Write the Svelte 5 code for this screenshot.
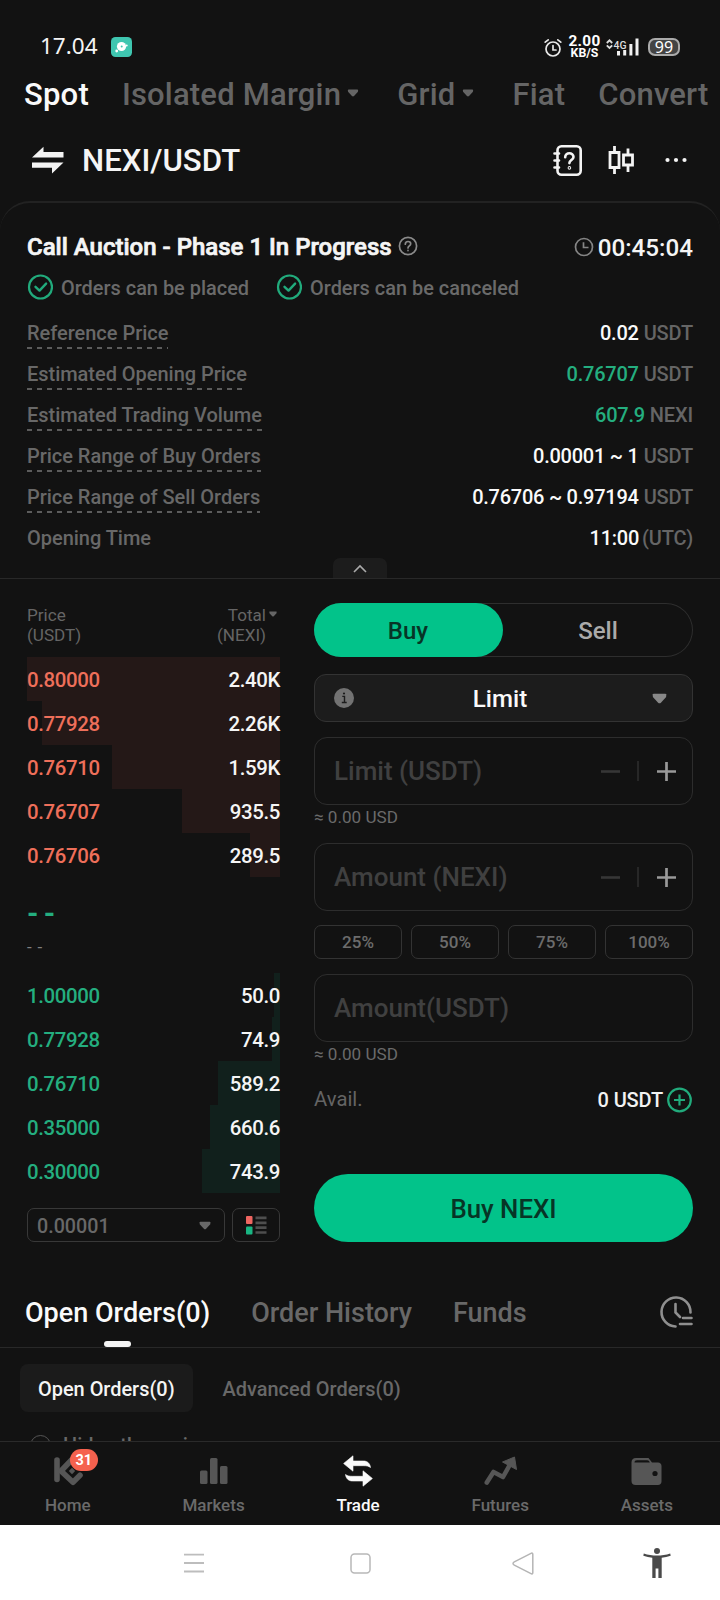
<script>
  const marketTabs = [
    { label: 'Spot', active: true },
    { label: 'Isolated Margin', menu: true },
    { label: 'Grid', menu: true },
    { label: 'Fiat' },
    { label: 'Convert' }
  ];

  const details = [
    { label: 'Reference Price', value: '0.02', unit: 'USDT' },
    { label: 'Estimated Opening Price', value: '0.76707', unit: 'USDT', green: true },
    { label: 'Estimated Trading Volume', value: '607.9', unit: 'NEXI', green: true },
    { label: 'Price Range of Buy Orders', value: '0.00001 ~ 1', unit: 'USDT' },
    { label: 'Price Range of Sell Orders', value: '0.76706 ~ 0.97194', unit: 'USDT' },
    { label: 'Opening Time', value: '11:00', unit: '(UTC)', plain: true }
  ];

  const asks = [
    { price: '0.80000', total: '2.40K', depth: 253 },
    { price: '0.77928', total: '2.26K', depth: 238 },
    { price: '0.76710', total: '1.59K', depth: 168 },
    { price: '0.76707', total: '935.5', depth: 98 },
    { price: '0.76706', total: '289.5', depth: 30 }
  ];

  const bids = [
    { price: '1.00000', total: '50.0', depth: 6 },
    { price: '0.77928', total: '74.9', depth: 8 },
    { price: '0.76710', total: '589.2', depth: 62 },
    { price: '0.35000', total: '660.6', depth: 70 },
    { price: '0.30000', total: '743.9', depth: 78 }
  ];

  const shares = ['25%', '50%', '75%', '100%'];
</script>

{#snippet caret(w, h)}
  <svg class="caret" width={w} height={h} viewBox="0 0 14 10"><path d="M1.6.6h10.8c1 0 1.400.9.800 1.900v1L8.300 8.900c-.7.800-1.900.800-2.600 0L.800 3.500v-1C.2 1.500.600.6 1.600.6z" fill="currentColor" /></svg>
{/snippet}

{#snippet check()}
  <svg width="26" height="26" viewBox="0 0 26 26" fill="none" stroke="#21ab7c">
    <circle cx="13.500" cy="13" r="11.500" stroke-width="2.200" />
    <path d="M8.500 12.800l4 3.800 6.600-7" stroke-width="2.400" stroke-linecap="round" stroke-linejoin="round" />
  </svg>
{/snippet}

{#snippet stepper()}
  <svg class="stepper" width="78" height="24" viewBox="0 0 78 24" fill="none">
    <path d="M1 12.500h19" stroke="#363636" stroke-width="2.600" />
    <path d="M38 2v20" stroke="#2c2c2c" stroke-width="1.700" />
    <path d="M57 12.500h19M66.500 3v19" stroke="#999" stroke-width="2.700" />
  </svg>
{/snippet}

<div class="screen">
  <header class="status">
    <span class="clock">17.04</span>
    <svg class="app" width="21" height="20" viewBox="0 0 21 20">
      <rect width="21" height="20" rx="4.500" fill="#3fc6b0" />
      <circle cx="10.500" cy="9.500" r="4.600" fill="#fff" />
      <circle cx="10.700" cy="9.500" r="1" fill="#3fc6b0" />
      <circle cx="5.700" cy="14" r="1.400" fill="#fff" />
      <circle cx="15.700" cy="8.500" r="1" fill="#fff" />
    </svg>
    <svg class="alarm" width="18" height="20" viewBox="0 0 18 20" fill="none" stroke="#e8e8e8" stroke-width="1.700" stroke-linecap="round">
      <circle cx="9" cy="11" r="7" />
      <path d="M9 7.500V12h3M1.200 4.200l3-2.400M16.800 4.200l-3-2.400" />
    </svg>
    <span class="speed"><b>2.00</b><i>KB/S</i></span>
    <svg class="bars" width="34" height="20" viewBox="0 0 34 20">
      <path d="M.8 6L3.500 3.300 6.200 6M.8 8.300L3.500 11l2.700-2.700" fill="none" stroke="#ddd" stroke-width="1.800" />
      <path d="M11 14h3v4.500h-3zM17.200 13h3v5.500h-3zM23.400 7h3v11.500h-3zM29.500 1.500h3v17h-3z" fill="#f0f0f0" />
      <text x="7.500" y="11.500" font-size="11.500" font-family="Roboto" font-weight="500" fill="#ddd" textLength="13" lengthAdjust="spacingAndGlyphs">4G</text>
    </svg>
    <span class="battery">99</span>
  </header>

  <nav class="markets">
    {#each marketTabs as t}
      <span class="market" class:active={t.active}>{t.label}{#if t.menu}{@render caret(12, 8)}{/if}</span>
    {/each}
  </nav>

  <div class="pair">
    <svg width="32" height="28" viewBox="0 0 32 28" fill="#f3f3f3">
      <path d="M0 11.500L11.500 .8V6H31.500v5.500zM31.500 16.500L20 27.500V21.800H0v-5.300z" />
    </svg>
    <h1>NEXI/USDT</h1>
    <svg class="guide" width="29" height="31" viewBox="0 0 29 31" fill="none" stroke="#f3f3f3" stroke-width="2.600" stroke-linecap="round">
      <rect x="4.500" y="1.300" width="23.200" height="28.400" rx="4" />
      <path d="M1.500 8.500h4.500M1.500 15.500h4.500M1.500 22.500h4.500" />
      <path d="M12.200 12.200c0-5.300 8.300-5 8.300-.300 0 3-4.100 3.300-4.100 6.200" />
      <circle cx="16.400" cy="22.900" r=".5" />
    </svg>
    <svg class="candles" width="26" height="28" viewBox="0 0 26 28" fill="none" stroke="#f3f3f3" stroke-width="2.800">
      <path d="M2 6.500h9v15H2zM6.500 0v6.500M6.500 21.500V28M15.500 9h9v10h-9zM20 2.500v6M20 19v7" />
    </svg>
    <svg class="dots" width="22" height="6" viewBox="0 0 22 6" fill="#f3f3f3"><circle cx="2.500" cy="3" r="2.100" /><circle cx="11" cy="3" r="2.100" /><circle cx="19.500" cy="3" r="2.100" /></svg>
  </div>

  <section class="auction">
    <div class="heading">
      <h2>Call Auction - Phase 1 In Progress</h2>
      <svg width="20" height="20" viewBox="0 0 20 20" fill="none" stroke="#8a8a8a" stroke-width="1.700" stroke-linecap="round">
        <circle cx="10" cy="10" r="8.600" />
        <path d="M7.300 8.200c0-3.600 5.400-3.500 5.400-.400 0 2-2.700 2.300-2.700 4.200M10 14.400v.200" />
      </svg>
      <svg class="wait" width="20" height="20" viewBox="0 0 20 20" fill="none" stroke="#858585" stroke-width="1.700">
        <circle cx="10" cy="10" r="8.500" /><path d="M9.500 5.300v5.200h5" />
      </svg>
      <time>00:45:04</time>
    </div>
    <div class="allowed">
      {@render check()}<span class="first">Orders can be placed</span>
      {@render check()}<span>Orders can be canceled</span>
    </div>
    {#each details as d}
      <div class="detail">
        <span class="label" class:plain={d.plain}>{d.label}</span>
        <span class="value" class:green={d.green}>{d.value}</span><span class="unit" class:tight={d.plain}>{d.unit}</span>
      </div>
    {/each}
    <div class="fold">
      <svg width="14" height="9" viewBox="0 0 14 9" fill="none" stroke="#aaa" stroke-width="1.600"><path d="M1 8l6-6 6 6" /></svg>
    </div>
  </section>

  <main>
    <section class="book">
      <div class="bookhead">
        <span>Price<br />(USDT)</span>
        <span class="total">Total<br />(NEXI)</span>
        {@render caret(8, 6)}
      </div>
      {#each asks as r}
        <div class="level">
          <span class="depth ask" style="width: {r.depth}px"></span>
          <span class="price red">{r.price}</span><span class="qty">{r.total}</span>
        </div>
      {/each}
      <div class="last"><span class="lastprice">- -</span><span class="lastfiat">- -</span></div>
      {#each bids as r}
        <div class="level">
          <span class="depth bid" style="width: {r.depth}px"></span>
          <span class="price green">{r.price}</span><span class="qty">{r.total}</span>
        </div>
      {/each}
      <div class="tools">
        <div class="tick"><span>0.00001</span>{@render caret(12, 9)}</div>
        <div class="mode">
          <svg width="21" height="19" viewBox="0 0 21 19">
            <rect x="0" y="0" width="6.500" height="8" rx="1" fill="#ee6560" />
            <rect x="0" y="10.500" width="6.500" height="8" rx="1" fill="#19b582" />
            <path d="M9.500 1.800h11M9.500 6.800h11M9.500 11.600h11M9.500 16.500h11" stroke="#4e4e4e" stroke-width="2.700" />
          </svg>
        </div>
      </div>
    </section>

    <section class="form">
      <div class="side"><span class="buy">Buy</span><span class="sell">Sell</span></div>
      <div class="type">
        <svg width="20" height="20" viewBox="0 0 20 20"><circle cx="10" cy="10" r="10" fill="#727272" /><path d="M8.300 8.400h2.200v6M7.800 14.500h4.900" fill="none" stroke="#1c1c1c" stroke-width="1.400" /><circle cx="10" cy="5.500" r="1.100" fill="#1c1c1c" /></svg>
        <span>Limit</span>
        {@render caret(15, 11)}
      </div>
      <div class="field"><span>Limit (USDT)</span>{@render stepper()}</div>
      <div class="approx">≈ 0.00 USD</div>
      <div class="field"><span>Amount (NEXI)</span>{@render stepper()}</div>
      <div class="shares">{#each shares as s}<span>{s}</span>{/each}</div>
      <div class="field"><span>Amount(USDT)</span></div>
      <div class="approx">≈ 0.00 USD</div>
      <div class="avail">
        <span>Avail.</span><strong>0 USDT</strong>
        <svg width="26" height="26" viewBox="0 0 26 26" fill="none" stroke="#21ab7c" stroke-width="2.200"><circle cx="12.500" cy="13" r="11.300" /><path d="M7 13h11M12.500 7.500v11" /></svg>
      </div>
      <button>Buy NEXI</button>
    </section>
  </main>

  <nav class="orders">
    <span class="current">Open Orders(0)</span><span class="history">Order History</span><span class="funds">Funds</span>
    <svg width="34" height="34" viewBox="0 0 34 34" fill="none" stroke="#8f8f8f" stroke-width="2.600" stroke-linecap="round">
      <path d="M16.500 31.500A14.500 14.500 0 1 1 31.500 17.500M16.500 9v8.500l4.500 4.500M24 23h8.500M21 29h11.500" />
    </svg>
  </nav>
  <section class="list">
    <div class="chips"><span class="chip">Open Orders(0)</span><span class="chip off">Advanced Orders(0)</span></div>
    <div class="hide"><i></i><span>Hide other pairs</span></div>
  </section>

  <nav class="bottom">
    <div class="item">
      <div class="icon home">
        <svg width="30" height="30" viewBox="0 0 30 30" fill="none" stroke="#565656" stroke-width="5.600">
          <path d="M4 4v19.500" stroke-linecap="round" />
          <path d="M18.500 4L8 15l12 11.300L27 19.300" stroke-linejoin="round" stroke-linecap="round" />
          <path d="M19 11.800l3.200 3.200-3.200 3.200-3.200-3.200z" fill="#565656" stroke="none" />
        </svg>
        <span class="badge">31</span>
      </div>
      <span>Home</span>
    </div>
    <div class="item">
      <div class="icon"><svg width="28" height="28" viewBox="0 0 28 28" fill="#565656"><rect x="0" y="13.500" width="7.500" height="13.500" rx="1.500" /><rect x="10" y="1" width="7.500" height="26" rx="1.500" /><rect x="20" y="9" width="7.500" height="18" rx="1.500" /></svg></div>
      <span>Markets</span>
    </div>
    <div class="item on">
      <div class="icon"><svg width="30" height="32" viewBox="0 0 30 32" fill="#fafafa">
        <path d="M.6 8.500L10 .8V6h10.500c4 0 6.500 2.500 7 6.500-2-1.500-4-1.800-7-1.800H10v5.500zM29.400 23.500L20 31.200V26H9.500C5.500 26 3 23.500 2.500 19.500c2 1.500 4 1.800 7 1.800H20v-5.500z" stroke="#fafafa" stroke-width=".6" stroke-linejoin="round" />
      </svg></div>
      <span>Trade</span>
    </div>
    <div class="item">
      <div class="icon"><svg width="33" height="30" viewBox="0 0 33 30" fill="none">
        <path d="M2.800 26.500L9.500 16l9.500 5L26 8.500" stroke="#565656" stroke-width="4.600" stroke-linecap="round" stroke-linejoin="round" />
        <path d="M18.500 6L30.500 1l2 12.500z" fill="#565656" stroke="#565656" stroke-linejoin="round" />
      </svg></div>
      <span>Futures</span>
    </div>
    <div class="item">
      <div class="icon"><svg width="31" height="29" viewBox="0 0 31 29">
        <path d="M5 1h12.500L21 5.500h6c2 0 3.500 1.500 3.500 3.500v15.500c0 2-1.500 3.500-3.500 3.500H4.500C2 28 .5 26.500.5 24V5.500C.5 2.500 2 1 5 1z" fill="#565656" />
        <path d="M3.500 5.500C3.500 4 4.500 3.300 6 3.300h10.200c1.300 0 2 .8 2.600 2.200z" fill="#121212" />
        <circle cx="24" cy="16.500" r="2.600" fill="#121212" />
      </svg></div>
      <span>Assets</span>
    </div>
  </nav>

  <footer>
    <svg class="menu" width="20" height="20" viewBox="0 0 20 20" stroke="#bdbdbd" stroke-width="1.800"><path d="M0 1.700h20M0 10h20M0 18.500h20" /></svg>
    <svg class="recent" width="21" height="21" viewBox="0 0 21 21" fill="none" stroke="#b8b8b8" stroke-width="1.500"><rect x="1" y="1" width="19" height="19" rx="3.500" /></svg>
    <svg class="back" width="22" height="23" viewBox="0 0 22 23" fill="none" stroke="#b5b5b5" stroke-width="1.500" stroke-linejoin="round"><path d="M19 1.300L2.300 9.800c-1.700.900-1.700 2.500 0 3.400L19 21.700c1 .500 1.800 0 1.800-1V2.300c0-1-.8-1.500-1.800-1z" /></svg>
    <svg class="person" width="28" height="30" viewBox="0 0 28 30" fill="#4a4a4a"><circle cx="14" cy="3" r="3" /><path d="M.8 5.500C9 8.200 19 8.200 27.200 5.500l.5 2.300c-3 1-6 1.600-9 2V30h-3.300V20.500h-2.800V30H9.300V9.800c-3-.4-6-1-9-2z" /></svg>
  </footer>
</div>

<style>
  :global(body) { background: #121212; }
  .screen {
    width: 720px; height: 1600px; overflow: hidden; background: #121212;
    display: flex; flex-direction: column;
    font-family: Roboto, sans-serif; font-weight: 500; color: #f5f5f5;
    line-height: 1; white-space: nowrap;
  }
  svg { display: block; flex: none; }
  h1, h2 { margin: 0; }

  .status { height: 72px; box-sizing: border-box; padding: 21px 39px 0 40px; display: flex; align-items: center; flex: none; }
  .clock { font: 400 22.500px/24px "Noto Sans", sans-serif; width: 71px; margin-top: -1px; }
  .alarm { margin-left: auto; margin-top: 2px; }
  .speed { width: 31px; margin-left: 7px; display: flex; flex-direction: column; align-items: center; color: #fff; }
  .speed b { font: 700 15.300px/13px Roboto, sans-serif; letter-spacing: .3px; margin-top: -1px; }
  .speed i { font: 700 12.300px/10px Roboto, sans-serif; }
  .bars { margin-left: 6px; }
  .battery {
    width: 28px; height: 14px; border: 2px solid #aaa; border-radius: 7px; background: #444;
    margin-left: 8px; margin-right: 1px; text-align: center; font: 400 16px/14px "Noto Sans", sans-serif; color: #fff;
  }

  .markets { height: 45px; flex: none; display: flex; align-items: center; padding-left: 24px; font-size: 31px; letter-spacing: .2px; color: #656565; }
  .market { display: flex; align-items: center; }
  .market .caret { margin: -3px 0 0 6px; }
  .market:nth-child(2) { margin-left: 33px; }
  .market:nth-child(3) { margin-left: 38px; }
  .market:nth-child(3) .caret { margin-left: 7px; }
  .market:nth-child(4) { margin-left: 38px; }
  .market:nth-child(5) { margin-left: 33px; }
  .market.active { color: #fafafa; }

  .pair { height: 84px; flex: none; box-sizing: border-box; padding: 2px 33px 0 32px; display: flex; align-items: center; }
  h1 { font-size: 31.200px; font-weight: 500; margin-left: 18px; flex: 1; padding-top: 2px; }
  .candles { margin-left: 26px; }
  .dots { margin-left: 31px; }

  .auction { height: 378px; flex: none; box-sizing: border-box; border-top: 2px solid #222; border-radius: 30px 30px 0 0; border-bottom: 1px solid #282828; padding: 0 27px; }
  .heading { height: 36px; padding-top: 26px; display: flex; align-items: center; }
  h2 { font-size: 24px; font-weight: 500; margin-right: 6px; -webkit-text-stroke: .7px currentColor; }
  .heading svg { margin-top: -2px; }
  .heading .wait { margin-left: auto; margin-top: 0; }
  time { font-size: 24.200px; margin-left: 4px; padding-top: 2px; }
  .allowed { height: 47px; display: flex; align-items: center; font-size: 19.930px; color: #6a6a6a; }
  .allowed svg { margin-top: -4px; }
  .allowed span { margin: 1px 0 0 8px; }
  .allowed .first { margin-right: 27px; }
  .detail { height: 41px; display: flex; align-items: center; font-size: 20px; }
  .label {
    height: 33px; line-height: 34px; color: #686868; margin-right: auto; margin-bottom: 1px; font-size: 20px; letter-spacing: -.03px;
    background: repeating-linear-gradient(90deg, #5c5c5c 0 5px, transparent 5px 10px) 0 100% / 100% 2px no-repeat;
  }
  .label.plain { background: none; }
  .value, .unit { padding-top: 1px; }
  .unit { color: #656565; margin-left: 5px; letter-spacing: -.15px; }
  .unit.tight { margin-left: 3px; }
  .value { color: #fafafa; letter-spacing: -.25px; }
  .green, .value.green { color: #24ae7f; }
  .red { color: #ee6f5a; }
  .fold { width: 54px; height: 20px; margin: 0 auto; background: #1c1c1c; border-radius: 7px 7px 0 0; display: flex; align-items: center; justify-content: center; }

  main { height: 663px; flex: none; display: flex; gap: 34px; padding: 0 27px; }
  .book { width: 253px; }
  .bookhead { display: flex; padding: 26px 0 12px; font-size: 17.100px; line-height: 20px; font-weight: 400; color: #656565; }
  .total { margin-left: auto; text-align: right; }
  .bookhead .caret { margin: 6px 3px 0 3px; }
  .level { height: 44px; display: flex; align-items: center; justify-content: space-between; font-size: 20.400px; letter-spacing: -.36px; position: relative; }
  .depth { position: absolute; right: 0; top: 0; bottom: 0; }
  .ask { background: #241817; }
  .bid { background: #11201c; }
  .price, .qty { position: relative; padding-top: 3px; }
  .last { height: 96px; box-sizing: border-box; padding-top: 17px; display: flex; flex-direction: column; }
  .lastprice { font-size: 29px; font-weight: 700; line-height: 38px; color: #24ae7f; word-spacing: -2px; }
  .lastfiat { font-size: 17px; font-weight: 400; line-height: 28px; color: #808080; word-spacing: 1.500px; margin-top: 1px; }
  .tools { display: flex; gap: 7px; margin-top: 15px; }
  .tick, .mode { height: 34px; box-sizing: border-box; border: 1px solid #383838; border-radius: 7px; display: flex; align-items: center; }
  .tick { width: 198px; padding: 3px 13px 0 9px; justify-content: space-between; font-size: 19.700px; color: #686868; }
  .tick span { padding-top: 1px; }
  .tick .caret { margin-top: -3px; }
  .mode { width: 48px; justify-content: center; }

  .form { width: 379px; padding-top: 24px; }
  .side { height: 54px; box-sizing: border-box; border-radius: 27px; box-shadow: inset 0 0 0 1px #2e2e2e; display: flex; font-size: 24px; line-height: 56px; text-align: center; }
  .buy { width: 189px; background: #02c38a; border-radius: 27px; color: #073526; text-indent: -1px; }
  .sell { flex: 1; color: #aaa; }
  .type { margin-top: 17px; height: 48px; box-sizing: border-box; border: 1px solid #333; border-radius: 12px; background: #1c1c1c; padding: 0 25px 0 19px; display: flex; align-items: center; justify-content: space-between; font-size: 24.100px; color: #888; }
  .type span { color: #fafafa; padding-top: 2px; margin-right: 5px; }
  .type svg:first-child { margin-right: -1px; }
  .field { height: 68px; box-sizing: border-box; border: 1px solid #2d2d2d; border-radius: 13px; display: flex; align-items: center; justify-content: space-between; padding: 0 14px 0 19px; font-size: 26px; color: #404040; }
  .type + .field { margin-top: 15px; }
  .approx { height: 38px; line-height: 24px; font-size: 17.100px; font-weight: 400; color: #6a6a6a; }
  .shares { display: flex; gap: 9px; margin: 14px 0 15px; }
  .shares span { width: 88px; height: 34px; box-sizing: border-box; border: 1px solid #333; border-radius: 7px; text-align: center; line-height: 33px; font-size: 17px; color: #6c6c6c; }
  .avail { height: 40px; display: flex; align-items: center; font-size: 20px; color: #f2f2f2; }
  .avail span { margin: -2px auto 0 0; color: #646464; font-weight: 400; font-size: 20.300px; }
  .avail strong { font-weight: 500; margin: 0 4px 0 0; letter-spacing: -.15px; }
  button { display: block; width: 379px; height: 68px; margin-top: 54px; border: 0; border-radius: 34px; background: #02c38a; color: #073526; font: 500 25.800px/68px Roboto, sans-serif; padding: 1px 0 0; }

  .orders { height: 106px; flex: none; box-sizing: border-box; border-bottom: 1px solid #282828; padding: 0 27px 0 25px; display: flex; align-items: center; font-size: 27px; color: #686868; }
  .orders span { height: 68px; line-height: 38px; margin-top: 38px; padding-top: 14px; box-sizing: border-box; }
  .orders svg { margin-left: auto; margin-top: 34px; }
  .orders .current { color: #fafafa; display: flex; flex-direction: column; align-items: center; }
  .current::after { content: ""; width: 27px; height: 6px; margin-top: 9px; border-radius: 3px; background: #f5f5f5; flex: none; }
  .history { margin-left: 41px; }
  .funds { margin-left: 41px; }
  .list { height: 93px; flex: none; overflow: hidden; padding: 16px 20px 0 20px; box-sizing: border-box; font-size: 19.930px; }
  .chips { display: flex; }
  .chip { height: 48px; line-height: 51px; padding: 0 18px; border-radius: 8px; background: #1b1b1b; }
  .chip.off { background: none; color: #686868; padding-left: 30px; }
  .hide { display: flex; align-items: center; margin: 22px 0 0 10px; color: #686868; height: 22px; }
  .hide span { padding-top: 2px; }
  .hide i { width: 21px; height: 21px; box-sizing: border-box; border: 1.500px solid #555; border-radius: 50%; margin-right: 12px; }

  .bottom { height: 84px; flex: none; box-sizing: border-box; border-top: 1px solid #2a2a2a; padding: 12px 47px 0 45px; display: flex; justify-content: space-between; font-size: 17px; color: #6a6a6a; }
  .item { display: flex; flex-direction: column; align-items: center; }
  .icon { height: 34px; display: flex; align-items: center; justify-content: center; margin-bottom: 8px; position: relative; }
  .item > span { line-height: 18px; }
  .item.on { color: #fafafa; }
  .badge { position: absolute; left: 17px; top: -5px; width: 28px; height: 22px; border-radius: 11px; background: #f5614e; color: #fff; font: 700 14.500px/23px Roboto, sans-serif; text-align: center; }

  footer { height: 75px; flex: none; box-sizing: border-box; background: #fff; display: flex; align-items: center; padding: 1px 49px 0 184px; }
  .recent { margin-left: 146px; }
  .back { margin-left: 141px; }
  .person { margin-left: auto; }
</style>
